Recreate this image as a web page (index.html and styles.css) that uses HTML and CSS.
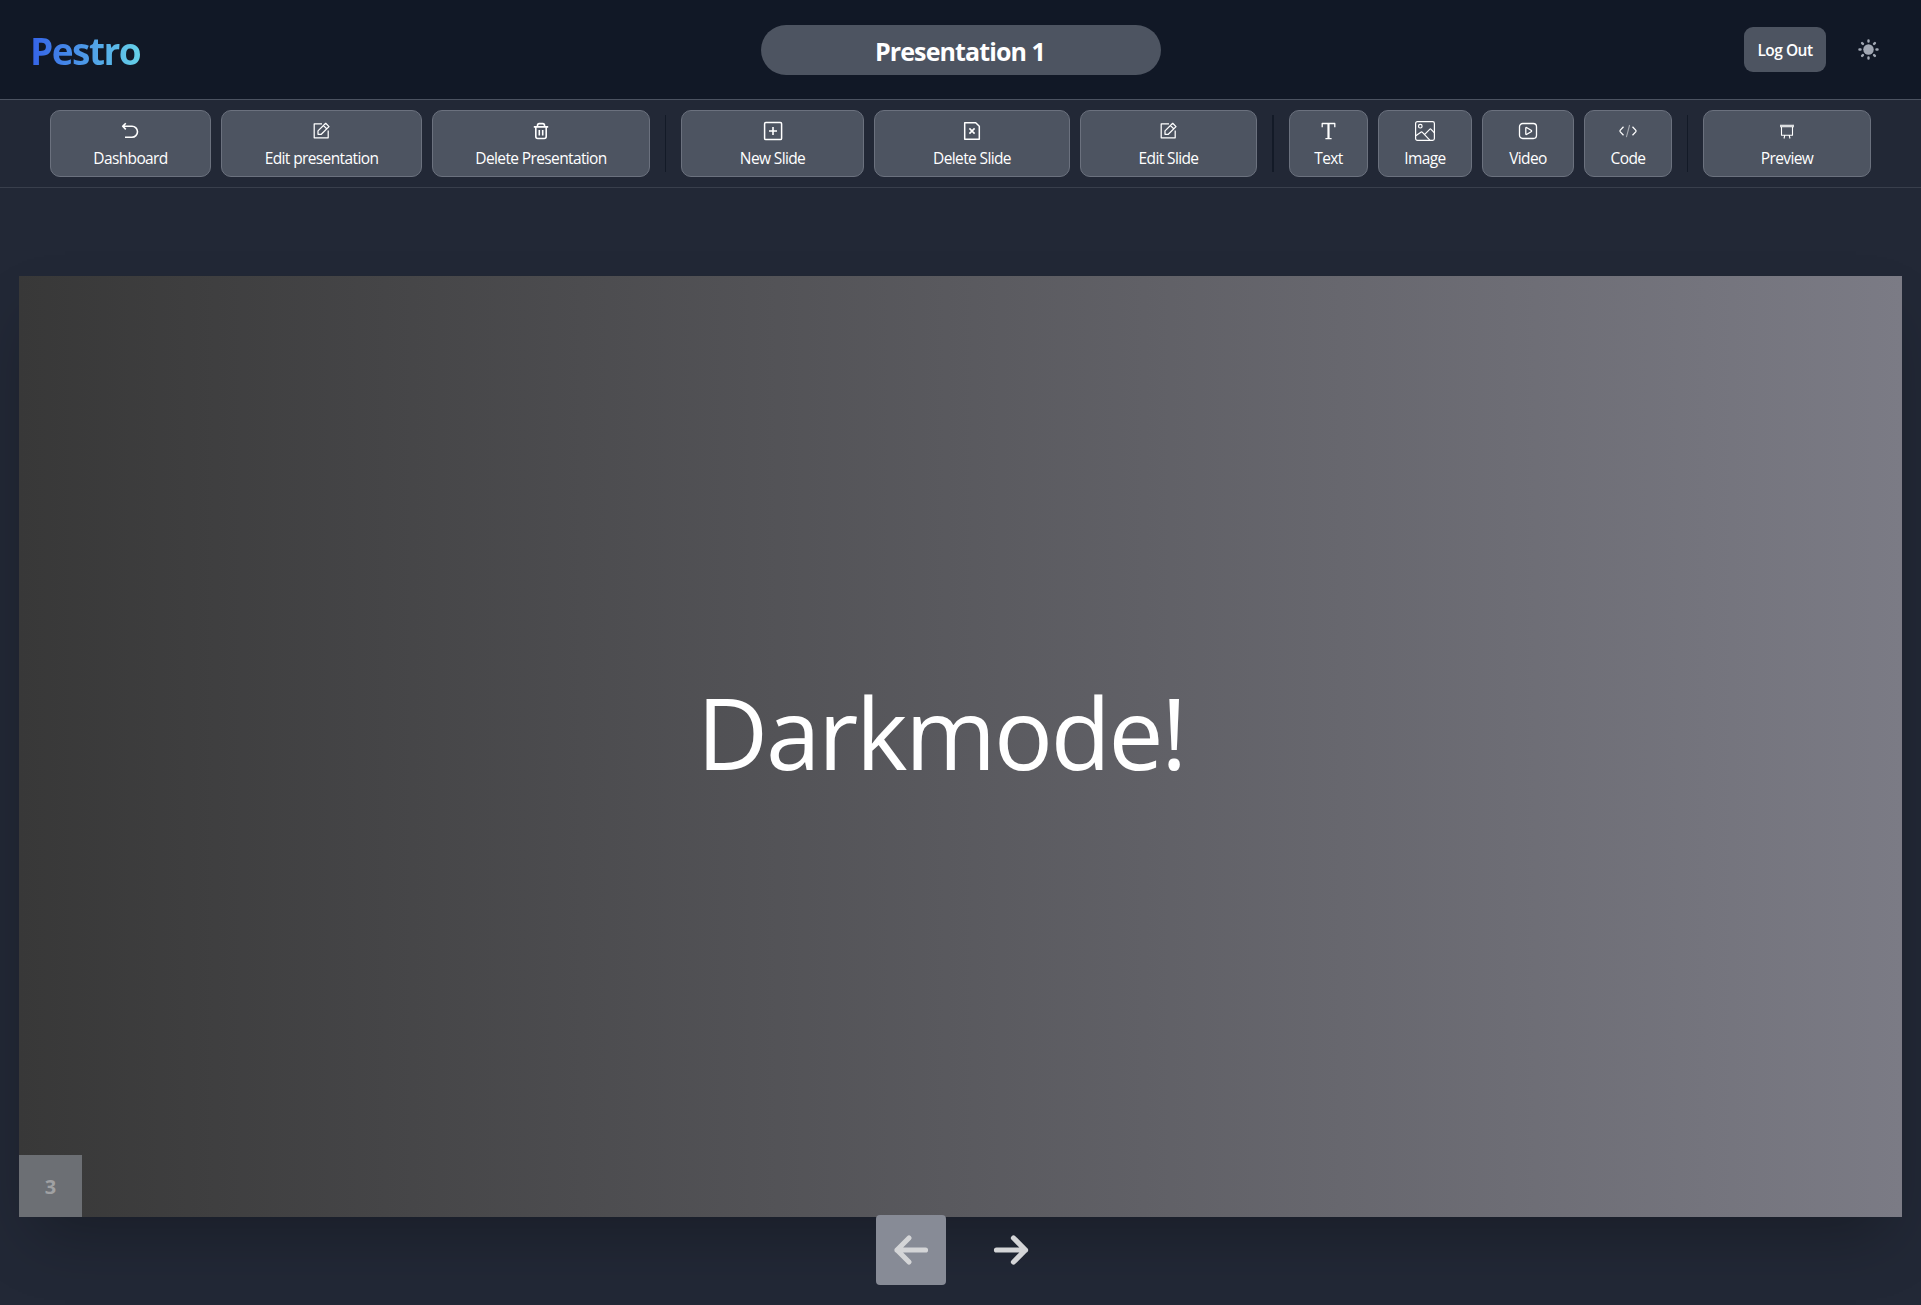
FILE: index.html
```html
<!DOCTYPE html>
<html lang="en">
<head>
<meta charset="utf-8">
<title>Pestro</title>
<link rel="stylesheet" href="styles.css">
</head>
<body>
<header class="header">
  <div class="brand"><span class="logo">Pestro</span></div>
  <h1 class="title"><span>Presentation 1</span></h1>
  <div class="account">
    <button class="logout"><span>Log Out</span></button>
    <svg class="sun" viewBox="0 0 20 20" fill="currentColor"><circle cx="10" cy="10" r="5"/><g stroke="currentColor" stroke-width="2.3" stroke-linecap="round"><path d="M10 1.4v1M10 17.6v1M1.4 10h1M17.6 10h1M3.9 3.9l.8.8M15.3 15.3l.8.8M3.9 16.1l.8-.8M15.3 4.7l.8-.8"/></g></svg>
  </div>
</header>
<nav class="toolbar">
  <button class="tool dashboard"><svg class="icon" viewBox="0 0 20 20"><path d="M1.7 5.3h9.3a5.5 5.5 0 0 1 0 11H4M4.8 2.2 1.7 5.3l3.1 3.1" stroke-width="1.6"/></svg><span class="label">Dashboard</span></button>
  <button class="tool edit-pres"><svg class="icon" viewBox="0 0 20 20"><path d="M10 2.8H2.2v14h14V9.5M6 13.3V9.9l7.7-7.6L17 5.6l-7.7 7.7zM11.5 4.6l3.2 3.2" stroke-width="1.25"/></svg><span class="label">Edit presentation</span></button>
  <button class="tool del-pres"><svg class="icon" viewBox="0 0 20 20"><path d="M2.8 5.9h14.4M6.5 5.8V4.3Q6.5 2.6 8.2 2.6h3.6q1.7 0 1.7 1.7v1.5M4.8 6.2v9.3q0 2 2 2h6.4q2 0 2-2V6.2M8.3 9v5.5M11.7 9v5.5" stroke-width="1.6"/></svg><span class="label">Delete Presentation</span></button>
  <i class="divider"></i>
  <button class="tool new-slide"><svg class="icon" viewBox="0 0 20 20"><rect x="1.6" y="1.6" width="17" height="17" rx="1.2" stroke-width="1.5"/><path d="M10 6v8M6 10h8" stroke-width="1.6"/></svg><span class="label">New Slide</span></button>
  <button class="tool del-slide"><svg class="icon" viewBox="0 0 20 20"><path d="M2.7 1.7h11l3.6 3.6v13H2.7z" stroke-width="1.5"/><path d="m7.4 7.4 5.2 5.2m0-5.2-5.2 5.2" stroke-width="1.6"/></svg><span class="label">Delete Slide</span></button>
  <button class="tool edit-slide"><svg class="icon" viewBox="0 0 20 20"><path d="M10 2.8H2.2v14h14V9.5M6 13.3V9.9l7.7-7.6L17 5.6l-7.7 7.7zM11.5 4.6l3.2 3.2" stroke-width="1.25"/></svg><span class="label">Edit Slide</span></button>
  <i class="divider thick"></i>
  <button class="tool text"><svg class="icon" viewBox="0 0 20 20"><path d="M3.2 6.2V2.5h12.6v3.7M6.4 17.6h6.2" stroke-width="1.3"/><path d="M9.5 2.5v15" stroke-width="2.2"/></svg><span class="label">Text</span></button>
  <button class="tool image"><svg class="icon" viewBox="0 0 20 20"><rect x=".6" y=".6" width="18.8" height="18.8" rx="1.8" stroke-width="1.2"/><circle cx="5.3" cy="5.2" r="1.8" stroke-width="1.2"/><path d="m.8 14.8 5.4-3.8q.6-.3 1.2.3l7.4 7.8M9.7 13.4l5-5.1q.7-.7 1.4 0l3.3 3.6" stroke-width="1.2"/></svg><span class="label">Image</span></button>
  <button class="tool video"><svg class="icon" viewBox="0 0 20 20"><rect x="1.5" y="2.5" width="17" height="15" rx="3.2" stroke-width="1.3"/><path d="M7.8 6.9q0-.7.7-.4l4.6 2.8q1 .7 0 1.4l-4.6 2.8q-.7.3-.7-.4z" stroke-width="1.3"/></svg><span class="label">Video</span></button>
  <button class="tool code"><svg class="icon" viewBox="0 0 20 20"><path d="M5.5 5.8 2.3 9.1q-.8.9 0 1.8l3.2 3.3M14.5 5.8l3.2 3.3q.8.9 0 1.8l-3.2 3.3" stroke-width="1.3"/><path d="M11.6 4 8.4 16.2" stroke-width="1.1" opacity=".5"/></svg><span class="label">Code</span></button>
  <i class="divider"></i>
  <button class="tool preview"><svg class="icon" viewBox="0 0 20 20"><path d="M3 5h14" stroke-width="2.6" opacity=".8"/><path d="M4.5 6v8.2h11V6M7.8 14.4 7 17.5M12.2 14.4l.8 3.1" stroke-width="1.1"/></svg><span class="label">Preview</span></button>
</nav>
<main class="stage">
  <section class="slide">
    <p class="headline">Darkmode!</p>
    <span class="page-number">3</span>
  </section>
  <div class="pager">
    <button class="arrow active"><svg viewBox="0 0 70 70"><path d="M49.5 35H21M33 23 21 35l12 12"/></svg></button>
    <button class="arrow"><svg viewBox="0 0 70 70"><path d="M20.5 35h29M37.5 23l12 12-12 12"/></svg></button>
  </div>
</main>
</body>
</html>
```
FILE: styles.css
```css
* { box-sizing: border-box; }
body {
  margin: 0;
  height: 1305px;
  overflow: hidden;
  display: flex;
  flex-direction: column;
  background: #222836;
  color: #fff;
  font-family: "Open Sans", "Noto Sans", sans-serif;
}
button { border: 0; padding: 0; color: inherit; font: inherit; }
.header {
  height: 100px;
  flex: none;
  display: grid;
  grid-template-columns: 1fr 400px 1fr;
  align-items: center;
  padding: 0 42px 0 30px;
  background: #111826;
  border-bottom: 1px solid #4b5260;
}
.brand { display: flex; padding-top: 3px; }
.logo {
  font-size: 37px;
  font-weight: 700;
  line-height: 48px;
  letter-spacing: -1.5px;
  padding-right: 1px;
  color: transparent;
  background: linear-gradient(90deg, #3462e8, #66d2e8);
  background-clip: text;
  -webkit-background-clip: text;
}
.title {
  margin: 0 -6px 0 6px;
  height: 50px;
  border-radius: 25px;
  background: #4d5461;
  font-size: 25px;
  font-weight: 700;
  letter-spacing: -.9px;
  line-height: 53px;
  text-align: center;
}
.title span { padding-right: 1px; }
.account { display: flex; justify-content: flex-end; align-items: center; gap: 32px; }
.logout {
  width: 82px;
  height: 45px;
  border-radius: 9px;
  background: #4d5461;
  font-size: 15.5px;
  font-weight: 600;
  letter-spacing: -.5px;
  line-height: 47px;
}
.sun { width: 21px; height: 21px; color: #a1a7b3; }
.toolbar {
  height: 88px;
  flex: none;
  display: flex;
  justify-content: center;
  align-items: center;
  gap: 10px;
  border-bottom: 1px solid #393f4c;
}
.tool {
  height: 67px;
  display: flex;
  flex-direction: column;
  align-items: center;
  padding-top: 10px;
  border: 1px solid #6b717e;
  border-radius: 10px;
  background: #4d5461;
}
.icon { width: 20px; height: 20px; fill: none; stroke: #fff; stroke-linejoin: round; }
.label { margin-top: 6px; font-size: 15.5px; line-height: 22px; letter-spacing: -.62px; white-space: nowrap; }
.dashboard { width: 161px; }
.edit-pres { width: 201px; }
.del-pres { width: 218px; }
.new-slide { width: 183px; }
.del-slide { width: 196px; }
.edit-slide { width: 177px; }
.text { width: 79px; }
.image { width: 94px; }
.video { width: 92px; }
.code { width: 88px; }
.preview { width: 168px; }
.divider { width: 1px; height: 57px; margin: 0 5px; background: #131a27; }
.thick { width: 2px; }
.stage { flex: 1; padding: 88px 19px 0; }
.slide {
  position: relative;
  height: 941px;
  display: flex;
  align-items: center;
  justify-content: center;
  background: linear-gradient(90deg, #383838, #7b7b85);
  box-shadow: 0 31px 62px -15px rgba(0, 0, 0, .27);
}
.headline { margin: -29px 39px 0 0; font-size: 98px; line-height: 130px; letter-spacing: -2.2px; }
.page-number {
  position: absolute;
  left: 0;
  bottom: 0;
  width: 63px;
  height: 62px;
  background: #6c6f74;
  color: #a0a1a3;
  font-size: 20px;
  font-weight: 700;
  line-height: 64px;
  text-align: center;
}
.pager { position: relative; display: flex; justify-content: center; gap: 30px; margin-top: -2px; }
.arrow { width: 70px; height: 70px; border-radius: 4px; background: transparent; }
.active { background: #878b96; }
.arrow svg { display: block; fill: none; stroke: #d4d5d7; stroke-width: 5.2; stroke-linecap: round; stroke-linejoin: round; }
```
